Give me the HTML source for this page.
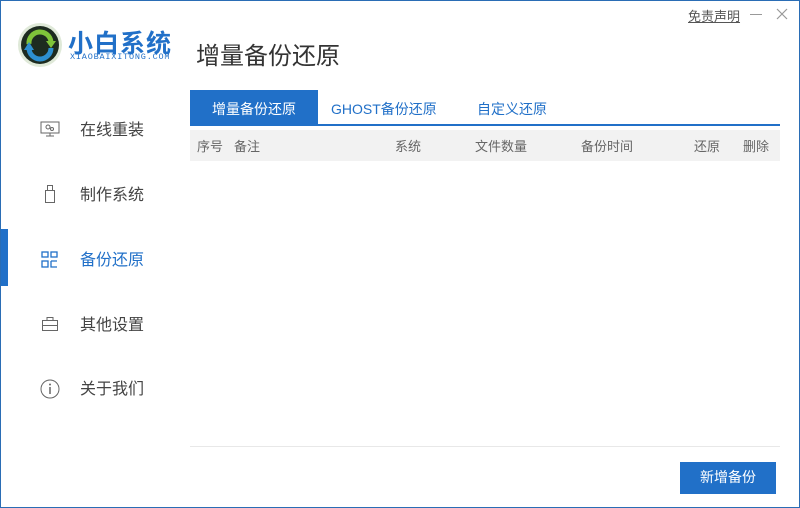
<!DOCTYPE html>
<html><head><meta charset="utf-8"><style>
*{margin:0;padding:0;box-sizing:border-box}
body{width:800px;height:508px;overflow:hidden;background:#fff;font-family:"Liberation Sans","Noto Sans CJK SC",sans-serif;position:relative}
.frame{position:absolute;left:0;top:0;width:800px;height:508px;border:1px solid #2a6db5;pointer-events:none}
.a{position:absolute;white-space:nowrap}
.nav{font-size:16px;color:#444}
.th{font-size:13px;color:#666;top:136px}
</style></head><body>
<div class="a" style="left:17px;top:22px;width:46px;height:46px">
<svg width="46" height="46" viewBox="0 0 46 46">
<circle cx="23" cy="23" r="22" fill="#dfe9d8"/>
<circle cx="23" cy="23" r="19" fill="#1d2b20"/>
<path d="M12 22 A11 11 0 0 1 34 20" stroke="#7fc43a" stroke-width="5" fill="none"/>
<path d="M34 26 A11 11 0 0 1 12 26" stroke="#2d8fd0" stroke-width="5" fill="none"/>
<path d="M29 19 L39 19 L34 26Z" fill="#7fc43a"/>
<path d="M7 28 L17 28 L12 20Z" fill="#2d8fd0"/>
</svg></div>
<div class="a" style="left:68px;top:24px;font-size:25px;color:#2170c8;font-weight:bold;letter-spacing:1px">小白系统</div>
<div class="a" style="left:70px;top:52px;font-size:8.5px;color:#2170c8;letter-spacing:0.8px;font-family:'Liberation Mono',monospace">XIAOBAIXITONG.COM</div>
<div class="a" style="left:196px;top:36px;font-size:24px;color:#333">增量备份还原</div>
<div class="a" style="left:688px;top:6px;font-size:13px;color:#555;text-decoration:underline">免责声明</div>
<div class="a" style="left:750px;top:14px;width:12px;height:1px;background:#999"></div>
<svg class="a" style="left:776px;top:8px" width="12" height="12"><path d="M1 1L11 11M11 1L1 11" stroke="#999" stroke-width="1.2"/></svg>

<div class="a" style="left:0;top:229px;width:8px;height:57px;background:#2170c8"></div>
<svg class="a" style="left:40px;top:121px" width="20" height="16" viewBox="0 0 20 16"><rect x="1" y="1" width="18" height="11" fill="none" stroke="#666"/><circle cx="8" cy="6" r="2" fill="none" stroke="#666"/><circle cx="12" cy="8" r="1.5" fill="none" stroke="#666"/><path d="M10 12v3M6 15h8" stroke="#666"/></svg>
<div class="a nav" style="left:80px;top:116px">在线重装</div>
<svg class="a" style="left:44px;top:184px" width="12" height="20" viewBox="0 0 12 20"><rect x="1.5" y="6.5" width="9" height="12" fill="none" stroke="#666"/><rect x="3.5" y="1.5" width="5" height="5" fill="none" stroke="#666"/></svg>
<div class="a nav" style="left:80px;top:181px">制作系统</div>
<svg class="a" style="left:41px;top:251px" width="18" height="18" viewBox="0 0 18 18"><g fill="none" stroke="#2170c8" stroke-width="1.3"><rect x="1" y="1" width="6" height="5"/><rect x="10" y="1" width="6" height="5"/><rect x="1" y="10" width="6" height="6"/><path d="M10 10h6M10 10v6h6"/></g></svg>
<div class="a nav" style="left:80px;top:246px;color:#2170c8">备份还原</div>
<svg class="a" style="left:41px;top:316px" width="18" height="16" viewBox="0 0 18 16"><g fill="none" stroke="#666"><rect x="1.5" y="4.5" width="15" height="10"/><path d="M6 4.5V1.5h6v3M1.5 9.5h15"/></g></svg>
<div class="a nav" style="left:80px;top:311px">其他设置</div>
<svg class="a" style="left:40px;top:379px" width="20" height="20" viewBox="0 0 20 20"><circle cx="10" cy="10" r="9" fill="none" stroke="#666"/><path d="M10 8v7" stroke="#666" stroke-width="1.5"/><circle cx="10" cy="5.5" r="1" fill="#666"/></svg>
<div class="a nav" style="left:80px;top:375px">关于我们</div>

<div class="a" style="left:190px;top:90px;width:128px;height:35px;background:#2170c8"></div>
<div class="a" style="left:190px;top:124px;width:590px;height:2px;background:#2170c8"></div>
<div class="a" style="left:212px;top:99px;font-size:14px;color:#fff">增量备份还原</div>
<div class="a" style="left:331px;top:99px;font-size:14px;color:#2170c8">GHOST备份还原</div>
<div class="a" style="left:477px;top:99px;font-size:14px;color:#2170c8">自定义还原</div>
<div class="a" style="left:190px;top:130px;width:590px;height:31px;background:#f2f2f2"></div>
<div class="a th" style="left:197px">序号</div>
<div class="a th" style="left:234px">备注</div>
<div class="a th" style="left:395px">系统</div>
<div class="a th" style="left:475px">文件数量</div>
<div class="a th" style="left:581px">备份时间</div>
<div class="a th" style="left:694px">还原</div>
<div class="a th" style="left:743px">删除</div>
<div class="a" style="left:190px;top:446px;width:590px;height:1px;background:#e8e8e8"></div>
<div class="a" style="left:680px;top:462px;width:96px;height:32px;background:#2170c8;color:#fff;font-size:14px;text-align:center;line-height:31px">新增备份</div>
<div class="frame"></div>
</body></html>
